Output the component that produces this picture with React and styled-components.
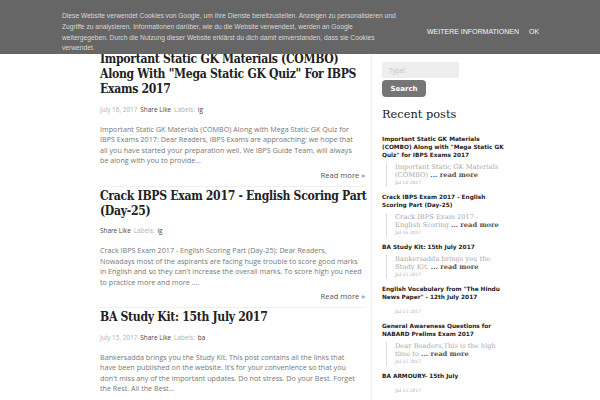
import React from 'react'
import styled, { createGlobalStyle } from 'styled-components'

const posts = [
  {
    title: 'Important Static GK Materials (COMBO) Along With "Mega Static GK Quiz" For IBPS Exams 2017',
    date: 'July 16, 2017',
    label: 'ig',
    body: 'Important Static GK Materials (COMBO) Along with Mega Static GK Quiz for IBPS Exams 2017: Dear Readers, IBPS Exams are approaching; we hope that all you have started your preparation well. We IBPS Guide Team, will always be along with you to provide...',
    more: true,
  },
  {
    title: 'Crack IBPS Exam 2017 - English Scoring Part (Day-25)',
    date: '',
    label: 'ig',
    body: 'Crack IBPS Exam 2017 - English Scoring Part (Day-25): Dear Readers, Nowadays most of the aspirants are facing huge trouble to score good marks in English and so they can\'t increase the overall marks. To score high you need to practice more and more ....',
    more: true,
  },
  {
    title: 'BA Study Kit: 15th July 2017',
    date: 'July 15, 2017',
    label: 'ba',
    body: 'Bankersadda brings you the Study Kit. This post contains all the links that have been published on the website. It\'s for your convenience so that you don\'t miss any of the important updates. Do not stress. Do your Best. Forget the Rest. All the Best...',
    more: false,
  },
]

const recent = [
  { title: 'Important Static GK Materials (COMBO) Along with "Mega Static GK Quiz" for IBPS Exams 2017', snippet: 'Important Static GK Materials (COMBO)', date: 'Jul 16 2017' },
  { title: 'Crack IBPS Exam 2017 - English Scoring Part (Day-25)', snippet: 'Crack IBPS Exam 2017 - English Scoring', date: 'Jul 16 2017' },
  { title: 'BA Study Kit: 15th July 2017', snippet: 'Bankersadda brings you the Study Kit.', date: 'Jul 15 2017' },
  { title: 'English Vocabulary from "The Hindu News Paper" - 12th July 2017', snippet: '', date: 'Jul 15 2017' },
  { title: 'General Awareness Questions for NABARD Prelims Exam 2017', snippet: 'Dear Readers,This is the high time to', date: 'Jul 15 2017' },
  { title: 'BA ARMOURY- 15th July', snippet: '', date: 'Jul 15 2017' },
]

export default function App() {
  return (
    <>
      <Global />
      <CookieBar>
        <CookieText>
          Diese Website verwendet Cookies von Google, um ihre Dienste bereitzustellen. Anzeigen zu personalisieren
          und Zugriffe zu analysieren. Informationen darüber, wie du die Website verwendest, werden an Google
          weitergegeben. Durch die Nutzung dieser Website erklärst du dich damit einverstanden, dass sie Cookies
          verwendet.
        </CookieText>
        <CookieLinks>
          <span>WEITERE INFORMATIONEN</span>
          <span>OK</span>
        </CookieLinks>
      </CookieBar>
      <Page>
        <Main>
          {posts.map((p, i) => (
            <Post key={i} $last={i === posts.length - 1}>
              <PostTitle>{p.title}</PostTitle>
              <Meta>
                {p.date && <Faint>{p.date}</Faint>}
                <Dark>Share Like</Dark>
                <Faint>Labels:</Faint>
                <Dark>{p.label}</Dark>
              </Meta>
              <Body>{p.body}</Body>
              {p.more && <ReadMore>Read more »</ReadMore>}
            </Post>
          ))}
        </Main>
        <Sidebar>
          <SearchInput placeholder="Type!" />
          <SearchButton>Search</SearchButton>
          <WidgetTitle>Recent posts</WidgetTitle>
          {recent.map((r, i) => (
            <RecentItem key={i}>
              <RecentTitle>{r.title}</RecentTitle>
              <Snippet $empty={!r.snippet}>
                {r.snippet && (
                  <SnippetText>
                    {r.snippet} <More>... read more</More>
                  </SnippetText>
                )}
                <SnippetDate>{r.date}</SnippetDate>
              </Snippet>
            </RecentItem>
          ))}
        </Sidebar>
      </Page>
    </>
  )
}

const Global = createGlobalStyle`
  html, body { margin: 0; padding: 0; background: #fff; overflow: hidden; }
  body { width: 600px; height: 400px; font-family: "Open Sans", sans-serif; }
`

const CookieBar = styled.div`
  position: fixed;
  top: 0;
  left: 0;
  right: 0;
  height: 54px;
  background: #666;
  display: flex;
  align-items: flex-start;
  padding: 11px 0 0 62px;
  box-sizing: border-box;
  z-index: 10;
`

const CookieText = styled.p`
  margin: 0;
  width: 337px;
  flex-shrink: 0;
  font-family: "Liberation Sans", Arial, sans-serif;
  font-size: 6.7px;
  line-height: 10.8px;
  color: #d8d8d8;
`

const CookieLinks = styled.div`
  display: flex;
  gap: 10px;
  margin: 16px 0 0 28px;
  font-family: "Liberation Sans", Arial, sans-serif;
  font-size: 7px;
  line-height: 9px;
  color: #f6f6f6;
`

const Page = styled.div`
  display: flex;
  padding: 52px 0 0 100px;
  width: 700px;
`

const Main = styled.div`
  width: 265px;
  flex-shrink: 0;
  padding-right: 6px;
  border-right: 1px solid #eee;
`

const Post = styled.div`
  padding: 0 0 6px;
  border-bottom: ${(p) => (p.$last ? 'none' : '1px solid #f0f0f0')};
  margin-bottom: 2px;
`

const PostTitle = styled.h2`
  margin: 0 -4px 0 0;
  font-family: "DejaVu Serif", "Liberation Serif", serif;
  font-stretch: condensed;
  font-size: 12.1px;
  line-height: 15px;
  font-weight: bold;
  letter-spacing: -0.3px;
  color: #222;
`

const Meta = styled.div`
  display: flex;
  gap: 3px;
  margin: 8.5px 0 10px;
  font-size: 6.4px;
  line-height: 8px;
`

const Faint = styled.span`
  color: #b0b0b0;
`

const Dark = styled.span`
  color: #444;
`

const Body = styled.p`
  margin: 0;
  padding-right: 3px;
  font-size: 7.2px;
  line-height: 10.5px;
  color: #777;
`

const ReadMore = styled.div`
  text-align: right;
  font-size: 7.6px;
  line-height: 10px;
  color: #555;
  margin-top: 4px;
`

const Sidebar = styled.div`
  padding: 10px 0 0 10px;
  width: 200px;
  display: flex;
  flex-direction: column;
  align-items: flex-start;
`

const SearchInput = styled.input`
  width: 77px;
  height: 16px;
  box-sizing: border-box;
  border: none;
  border-radius: 2px;
  background: #eee;
  padding: 0 7px;
  font-family: "Open Sans", sans-serif;
  font-size: 6.5px;
  outline: none;
  &::placeholder { color: #c4c4c4; }
`

const SearchButton = styled.button`
  margin-top: 2px;
  width: 44px;
  height: 17px;
  border: none;
  border-radius: 4px;
  background: #767676;
  color: #fff;
  font-family: "DejaVu Sans", sans-serif;
  font-weight: bold;
  font-size: 7px;
  padding: 0;
`

const WidgetTitle = styled.h3`
  margin: 9px 0 13px;
  font-family: "DejaVu Serif", "Liberation Serif", serif;
  font-weight: normal;
  font-size: 11.4px;
  line-height: 16px;
  color: #222;
`

const RecentItem = styled.div`
  width: 125px;
  margin-bottom: 6px;
`

const RecentTitle = styled.div`
  font-family: "DejaVu Sans", sans-serif;
  font-weight: bold;
  font-size: 5.8px;
  line-height: 8px;
  color: #222;
`

const Snippet = styled.div`
  margin: ${(p) => (p.$empty ? '7px 0 0 13px' : '4px 0 0 4px')};
  padding-left: ${(p) => (p.$empty ? '0' : '8px')};
  border-left: ${(p) => (p.$empty ? 'none' : '1px solid #ddd')};
`

const SnippetText = styled.div`
  font-family: "DejaVu Serif", serif;
  font-size: 6.7px;
  line-height: 8px;
  color: #aaa;
  width: 108px;
`

const More = styled.span`
  color: #555;
  font-weight: bold;
`

const SnippetDate = styled.div`
  font-family: "DejaVu Serif", serif;
  font-size: 4.5px;
  line-height: 8px;
  color: #aaa;
`
